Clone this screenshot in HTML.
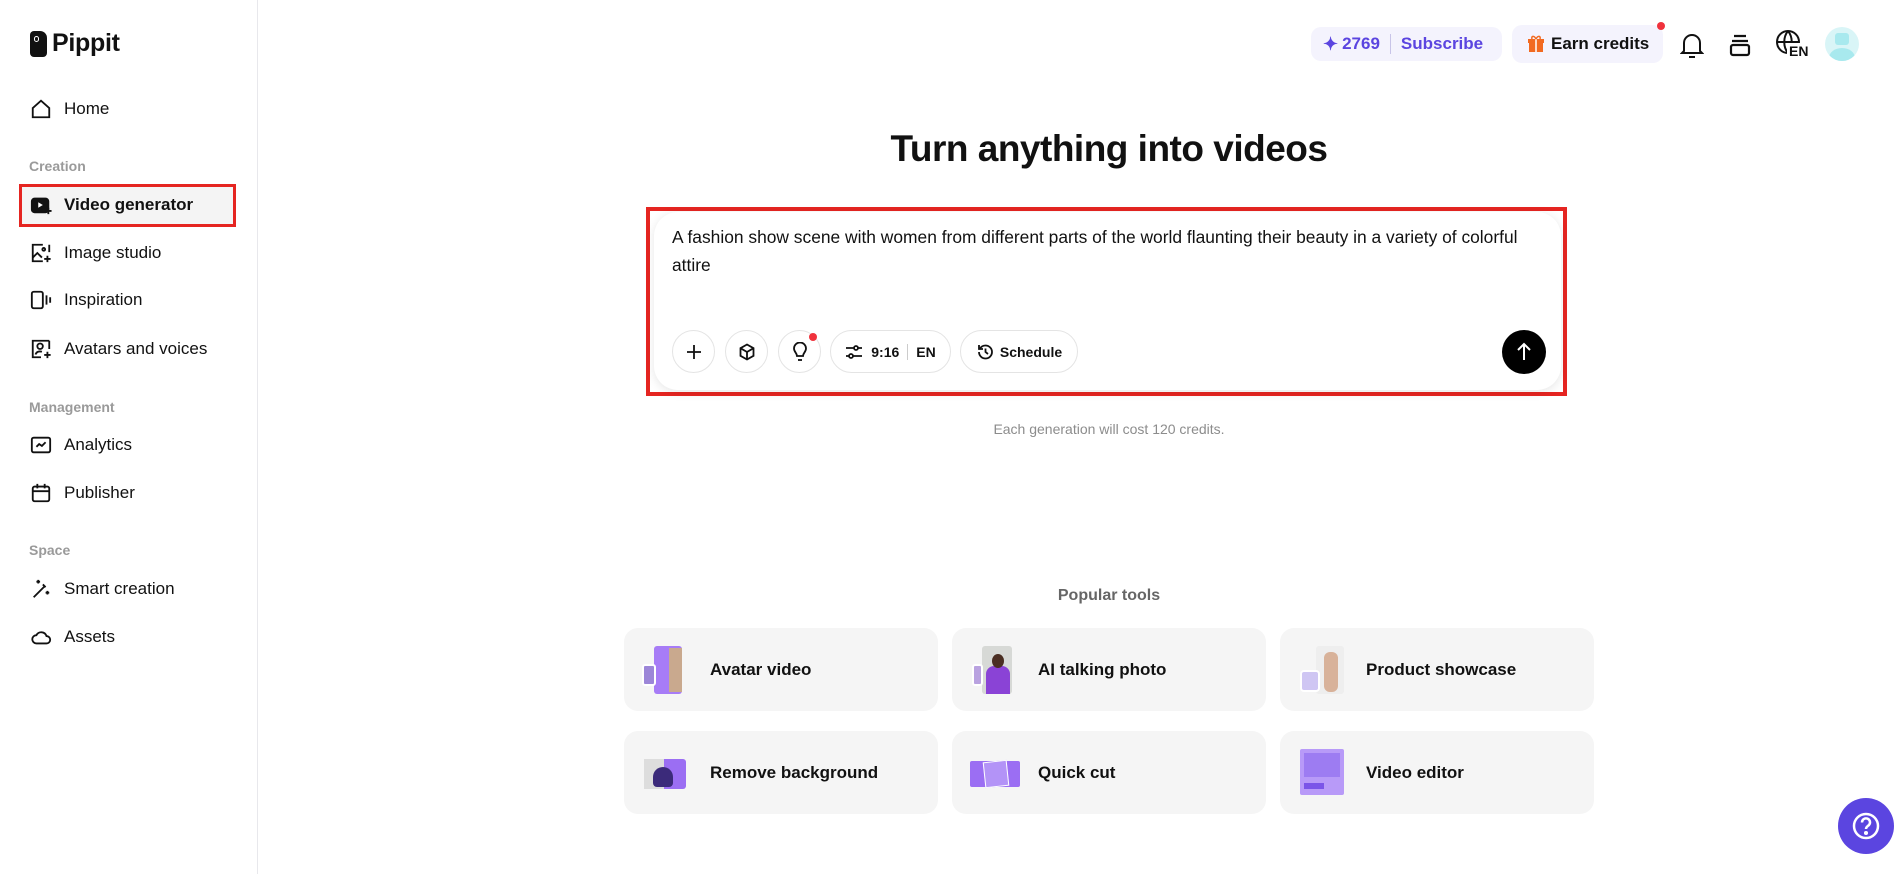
<!DOCTYPE html>
<html><head><meta charset="utf-8"><style>
*{box-sizing:border-box;margin:0;padding:0}
body{width:1900px;height:874px;overflow:hidden;background:#fff;font-family:"Liberation Sans",sans-serif;color:#111;position:relative}
.sb{position:absolute;left:0;top:0;width:258px;height:874px;border-right:1px solid #e8e8ec}
.abs{position:absolute}
.nav{position:absolute;left:30px;display:flex;align-items:center;font-size:17px;color:#111;height:24px}
.nav svg{width:22px;height:22px;margin-right:12px;fill:none;stroke:#111;stroke-width:2}
.lbl{position:absolute;left:29px;font-size:14px;color:#9a9a9a;font-weight:bold}
.btn{position:absolute;top:330px;height:43px;border:1px solid #e4e4e4;border-radius:22px;display:flex;align-items:center;justify-content:center;font-size:14px;font-weight:bold;background:#fff}
.btn svg{fill:none;stroke:#111;stroke-width:1.8}
.card{position:absolute;width:314px;height:83px;background:#f5f5f5;border-radius:14px;display:flex;align-items:center;padding-left:18px;font-size:17px;font-weight:bold;color:#111}
.th{width:48px;height:48px;margin-right:20px;position:relative;flex:none}
</style></head><body>
<div class="sb">
  <div class="abs" style="left:30px;top:31px;width:17px;height:26px;background:#111;border-radius:4px 7px 4px 4px"><div style="position:absolute;left:4px;top:5px;width:5px;height:6px;border:1.5px solid #fff;border-radius:3px"></div></div>
  <div class="abs" style="left:52px;top:29px;font-size:25px;font-weight:bold;letter-spacing:-0.3px">Pippit</div>

  <div class="nav" style="top:97px"><svg viewBox="0 0 24 24"><path d="M3 11L12 3l9 8v10H3z"/></svg>Home</div>
  <div class="lbl" style="top:158px">Creation</div>
  <div class="abs" style="left:19px;top:184px;width:217px;height:43px;border:3px solid #e52521;background:#f4f4f4"></div>
  <div class="nav" style="top:193px;font-weight:bold"><svg viewBox="0 0 24 24"><rect x="2" y="5" width="18" height="15" rx="3" fill="#111"/><path d="M9 9l5 3-5 3z" fill="#fff" stroke="none"/><path d="M20 15v7M16.5 18.5h7" stroke="#111" stroke-width="2"/></svg>Video generator</div>
  <div class="nav" style="top:241px"><svg viewBox="0 0 24 24"><path d="M14 3H3v18h11M21 3v8"/><path d="M3 17l5-5 5 5"/><circle cx="15" cy="8" r="1.5"/><path d="M19 15v7M15.5 18.5h7"/></svg>Image studio</div>
  <div class="nav" style="top:288px"><svg viewBox="0 0 24 24"><rect x="2" y="3" width="12" height="18" rx="2"/><path d="M18 7v10M22 9v6"/></svg>Inspiration</div>
  <div class="nav" style="top:337px"><svg viewBox="0 0 24 24"><path d="M13 3H3v18h9M21 3v9M13 3h8"/><circle cx="11" cy="9" r="3"/><path d="M6 18c1-3 4-4 7-3"/><path d="M19 15v7M15.5 18.5h7"/></svg>Avatars and voices</div>
  <div class="lbl" style="top:399px">Management</div>
  <div class="nav" style="top:433px"><svg viewBox="0 0 24 24"><rect x="2" y="4" width="20" height="16" rx="2"/><path d="M7 14l3-3 3 2 4-4"/></svg>Analytics</div>
  <div class="nav" style="top:481px"><svg viewBox="0 0 24 24"><rect x="3" y="5" width="18" height="16" rx="2"/><path d="M3 10h18M8 2v5M16 2v5"/></svg>Publisher</div>
  <div class="lbl" style="top:542px">Space</div>
  <div class="nav" style="top:577px"><svg viewBox="0 0 24 24"><path d="M4 21L16 9M14 7l3 3"/><path d="M9 2v4M7 4h4M19 14v4M17 16h4"/></svg>Smart creation</div>
  <div class="nav" style="top:625px"><svg viewBox="0 0 24 24"><path d="M7 19h11a4 4 0 000-8 6 6 0 00-11-1 4.5 4.5 0 000 9z"/></svg>Assets</div>
</div>

<div class="abs" style="left:1311px;top:27px;width:191px;height:34px;background:#f4f3fd;border-radius:10px;display:flex;align-items:center;padding-left:12px;font-size:17px;font-weight:bold;color:#5b45e0">
  <span style="font-size:18px;margin-right:4px">✦</span>2769<span style="width:1px;height:20px;background:#c8c4e8;margin:0 10px"></span>Subscribe</div>
<div class="abs" style="left:1512px;top:25px;width:151px;height:38px;background:#f4f3fd;border-radius:10px;display:flex;align-items:center;padding-left:16px;font-size:17px;font-weight:bold">
  <svg width="16" height="18" viewBox="0 0 16 18" style="margin-right:7px"><rect x="1" y="6" width="14" height="11" fill="#f26a21"/><rect x="0" y="4" width="16" height="4" fill="#f26a21"/><path d="M8 4v13" stroke="#fff" stroke-width="1.5"/><path d="M8 4C6 0 3 1 4 4M8 4c2-4 5-3 4 0" stroke="#f26a21" fill="none" stroke-width="1.5"/></svg>Earn credits</div>
<div class="abs" style="left:1657px;top:22px;width:8px;height:8px;background:#f0323c;border-radius:50%"></div>
<svg class="abs" style="left:1680px;top:31px" width="24" height="28" viewBox="0 0 24 28" fill="none" stroke="#111" stroke-width="2"><path d="M4 20V12a8 8 0 0116 0v8l2 2H2z"/><path d="M9 26h6"/></svg>
<svg class="abs" style="left:1728px;top:33px" width="24" height="24" viewBox="0 0 24 24" fill="none" stroke="#111" stroke-width="2.2"><path d="M6 3h12M4 8h16"/><rect x="3" y="12" width="18" height="10" rx="2"/></svg>
<div class="abs" style="left:1775px;top:29px;width:32px;height:32px">
 <svg width="28" height="28" viewBox="0 0 28 28" fill="none" stroke="#111" stroke-width="2"><circle cx="13" cy="13" r="11"/><path d="M2 13h22M13 2c-5 6-5 16 0 22M13 2c5 6 5 16 0 22"/></svg>
 <div style="position:absolute;left:12px;top:14px;background:#fff;font-size:14px;font-weight:bold;line-height:16px;padding-left:2px">EN</div></div>
<div class="abs" style="left:1825px;top:27px;width:34px;height:34px;border-radius:50%;background:#d9f5f7;overflow:hidden"><div style="position:absolute;left:10px;top:6px;width:14px;height:12px;background:#a8e9ee;border-radius:3px"></div><div style="position:absolute;left:4px;top:21px;width:26px;height:20px;background:#a8e9ee;border-radius:50%"></div></div>

<div class="abs" style="left:650px;top:128px;width:918px;text-align:center;font-size:37px;font-weight:bold;letter-spacing:-0.5px">Turn anything into videos</div>

<div class="abs" style="left:646px;top:207px;width:921px;height:189px;border:4px solid #e52521"></div>
<div class="abs" style="left:654px;top:212px;width:907px;height:178px;border-radius:24px;background:#fff;box-shadow:0 2px 10px rgba(0,0,0,.1)"></div>
<div class="abs" style="left:672px;top:223px;width:870px;font-size:17.4px;line-height:28px;color:#111">A fashion show scene with women from different parts of the world flaunting their beauty in a variety of colorful attire</div>
<div class="btn" style="left:672px;width:43px"><svg width="18" height="18" viewBox="0 0 18 18"><path d="M9 2v14M2 9h14"/></svg></div>
<div class="btn" style="left:725px;width:43px"><svg width="18" height="18" viewBox="0 0 18 18"><path d="M9 1.5l6.5 3.7v7.6L9 16.5l-6.5-3.7V5.2z"/><path d="M2.5 5.2L9 9l6.5-3.8M9 9v7.5"/></svg></div>
<div class="btn" style="left:778px;width:43px"><svg width="18" height="20" viewBox="0 0 18 20"><path d="M6 14c0-3-3-4-3-7.5a6 6 0 0112 0C15 10 12 11 12 14z"/><path d="M7 18h4"/></svg></div>
<div class="abs" style="left:809px;top:333px;width:8px;height:8px;background:#f0323c;border-radius:50%"></div>
<div class="btn" style="left:830px;width:121px"><svg width="18" height="16" viewBox="0 0 18 16" style="margin-right:8px"><path d="M1 4h16M1 12h16"/><circle cx="11" cy="4" r="2" fill="#fff"/><circle cx="6" cy="12" r="2" fill="#fff"/></svg>9:16<span style="width:1px;height:16px;background:#ccc;margin:0 8px"></span>EN</div>
<div class="btn" style="left:960px;width:118px"><svg width="18" height="18" viewBox="0 0 18 18" style="margin-right:6px"><path d="M3 9a6.5 6.5 0 106.5-6.5A6.5 6.5 0 004 5.5"/><path d="M3 2v4h4M9.5 5.5V9l2.5 2"/></svg>Schedule</div>
<div class="abs" style="left:1502px;top:330px;width:44px;height:44px;border-radius:50%;background:#000"><svg width="44" height="44" viewBox="0 0 44 44" fill="none" stroke="#fff" stroke-width="2"><path d="M22 30V14M16 20l6-6 6 6"/></svg></div>

<div class="abs" style="left:650px;top:421px;width:918px;text-align:center;font-size:14px;color:#8c8c8c">Each generation will cost 120 credits.</div>
<div class="abs" style="left:650px;top:587px;width:918px;text-align:center;font-size:16px;color:#666;font-weight:bold">Popular tools</div>

<div class="card" style="left:624px;top:628px"><div class="th"><div style="position:absolute;left:12px;top:0;width:28px;height:48px;background:#a77cf6;border-radius:3px"></div><div style="position:absolute;left:27px;top:2px;width:13px;height:44px;background:#c9a98e"></div><div style="position:absolute;left:0;top:18px;width:14px;height:22px;background:#9c86d8;border:2px solid #fff;border-radius:3px"></div></div>Avatar video</div>
<div class="card" style="left:952px;top:628px"><div class="th"><div style="position:absolute;left:12px;top:0;width:30px;height:48px;background:#d7d9d6;border-radius:3px"></div><div style="position:absolute;left:16px;top:20px;width:24px;height:28px;background:#8a43d6;border-radius:8px 8px 0 0"></div><div style="position:absolute;left:22px;top:8px;width:12px;height:14px;background:#4a2e22;border-radius:50%"></div><div style="position:absolute;left:2px;top:18px;width:11px;height:22px;background:#b9a2e0;border:2px solid #fff;border-radius:3px"></div></div>AI talking photo</div>
<div class="card" style="left:1280px;top:628px"><div class="th"><div style="position:absolute;left:18px;top:0;width:28px;height:48px;background:#eee;border-radius:3px"></div><div style="position:absolute;left:26px;top:6px;width:14px;height:40px;background:#d8b29a;border-radius:6px"></div><div style="position:absolute;left:2px;top:24px;width:20px;height:22px;background:#cfc6f3;border:2px solid #fff;border-radius:4px"></div></div>Product showcase</div>
<div class="card" style="left:624px;top:731px"><div class="th"><div style="position:absolute;left:2px;top:10px;width:20px;height:30px;background:#ddd"></div><div style="position:absolute;left:22px;top:10px;width:22px;height:30px;background:#9b6ef3;border-radius:0 3px 3px 0"></div><div style="position:absolute;left:11px;top:18px;width:20px;height:20px;background:#3b2a7a;border-radius:50% 50% 4px 4px"></div></div>Remove background</div>
<div class="card" style="left:952px;top:731px"><div class="th"><div style="position:absolute;left:0;top:12px;width:50px;height:26px;background:#9b6ef3;border-radius:2px"></div><div style="position:absolute;left:14px;top:12px;width:24px;height:26px;background:#b393f7;border:1px solid #fff;transform:rotate(-6deg)"></div></div>Quick cut</div>
<div class="card" style="left:1280px;top:731px"><div class="th"><div style="position:absolute;left:2px;top:0;width:44px;height:46px;background:#b89af8;border-radius:2px"></div><div style="position:absolute;left:6px;top:4px;width:36px;height:24px;background:#9d7cf2"></div><div style="position:absolute;left:6px;top:34px;width:20px;height:6px;background:#7b55e8"></div></div>Video editor</div>

<div class="abs" style="left:1838px;top:798px;width:56px;height:56px;border-radius:50%;background:#5b45e0"><svg width="56" height="56" viewBox="0 0 56 56" fill="none" stroke="#fff" stroke-width="2.5"><circle cx="28" cy="28" r="12"/><path d="M24 24.5a4 4 0 117 2.5c-1.5 1.3-3 2-3 4"/><circle cx="28" cy="35" r="0.8" fill="#fff"/></svg></div>
</body></html>
